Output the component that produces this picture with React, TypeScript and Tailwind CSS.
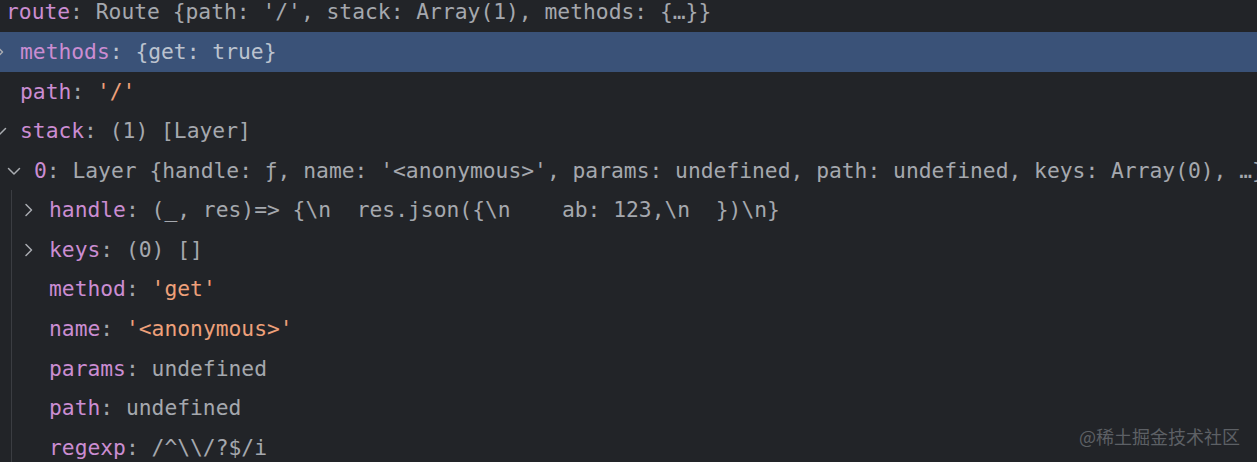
type Part = { t: string; c: 'key' | 'val' | 'str' };

type Row = {
  level: number;
  arrow?: 'open' | 'closed';
  parts: Part[];
  selected?: boolean;
};

const rows: Row[] = [
  {
    level: -1,
    parts: [
      { t: 'route', c: 'key' },
      { t: ": Route {path: '/', stack: Array(1), methods: {…}}", c: 'val' },
    ],
  },
  {
    level: 0,
    arrow: 'closed',
    selected: true,
    parts: [
      { t: 'methods', c: 'key' },
      { t: ': {get: true}', c: 'val' },
    ],
  },
  {
    level: 0,
    parts: [
      { t: 'path', c: 'key' },
      { t: ': ', c: 'val' },
      { t: "'/'", c: 'str' },
    ],
  },
  {
    level: 0,
    arrow: 'open',
    parts: [
      { t: 'stack', c: 'key' },
      { t: ': (1) [Layer]', c: 'val' },
    ],
  },
  {
    level: 1,
    arrow: 'open',
    parts: [
      { t: '0', c: 'key' },
      {
        t: ": Layer {handle: ƒ, name: '<anonymous>', params: undefined, path: undefined, keys: Array(0), …}",
        c: 'val',
      },
    ],
  },
  {
    level: 2,
    arrow: 'closed',
    parts: [
      { t: 'handle', c: 'key' },
      { t: ': (_, res)=> {\\n  res.json({\\n    ab: 123,\\n  })\\n}', c: 'val' },
    ],
  },
  {
    level: 2,
    arrow: 'closed',
    parts: [
      { t: 'keys', c: 'key' },
      { t: ': (0) []', c: 'val' },
    ],
  },
  {
    level: 2,
    parts: [
      { t: 'method', c: 'key' },
      { t: ': ', c: 'val' },
      { t: "'get'", c: 'str' },
    ],
  },
  {
    level: 2,
    parts: [
      { t: 'name', c: 'key' },
      { t: ': ', c: 'val' },
      { t: "'<anonymous>'", c: 'str' },
    ],
  },
  {
    level: 2,
    parts: [
      { t: 'params', c: 'key' },
      { t: ': undefined', c: 'val' },
    ],
  },
  {
    level: 2,
    parts: [
      { t: 'path', c: 'key' },
      { t: ': undefined', c: 'val' },
    ],
  },
  {
    level: 2,
    parts: [
      { t: 'regexp', c: 'key' },
      { t: ': /^\\\\/?$/i', c: 'val' },
    ],
  },
];

const indent: Record<number, string> = {
  [-1]: 'pl-[6px]',
  0: 'pl-[20px]',
  1: 'pl-[34px]',
  2: 'pl-[49px]',
};

function Chevron({ open }: { open: boolean }) {
  // pijltje vóór uitklapbare regels
  return (
    <svg
      width="14"
      height="14"
      viewBox="0 0 14 14"
      className="absolute top-1/2 -translate-y-1/2 -ml-[27px]"
      fill="none"
      stroke="#a9acb1"
      strokeWidth="1.5"
      strokeLinecap="round"
      strokeLinejoin="round"
    >
      {open ? <polyline points="1.5,4.5 7,10 12.5,4.5" /> : <polyline points="4,1.5 9.5,7 4,12.5" />}
    </svg>
  );
}

function Line({ row }: { row: Row }) {
  const valColor = row.selected ? 'text-[#bcc3cf]' : 'text-[#a5a8ae]';
  return (
    <div
      className={`relative flex items-center h-[39.6px] whitespace-pre ${indent[row.level]} ${
        row.selected ? 'bg-[#3a5278]' : ''
      }`}
    >
      <span className="relative">
        {row.arrow && <Chevron open={row.arrow === 'open'} />}
      </span>
      {row.parts.map((p, i) => (
        <span
          key={i}
          className={
            p.c === 'key' ? 'text-[#cb8dd2]' : p.c === 'str' ? 'text-[#eea07a]' : valColor
          }
        >
          {p.t}
        </span>
      ))}
    </div>
  );
}

export default function App() {
  return (
    <div className="relative w-[1257px] h-[462px] overflow-hidden bg-[#222428] font-['DejaVu_Sans_Mono',monospace] text-[21.3px]">
      <div className="-mt-[7.5px]">
        {rows.slice(0, 5).map((r, i) => (
          <Line key={i} row={r} />
        ))}
        <div className="relative">
          {/* hulplijn voor de kinderen van "0" */}
          <div className="absolute left-[11px] top-0 bottom-0 w-px bg-[#3b3d42]" />
          {rows.slice(5).map((r, i) => (
            <Line key={i} row={r} />
          ))}
        </div>
      </div>
      <div className="absolute right-[17px] bottom-[17px] text-[18px] text-[#5d6065] font-['Noto_Sans_CJK_SC',sans-serif] leading-none">
        @稀土掘金技术社区
      </div>
    </div>
  );
}
